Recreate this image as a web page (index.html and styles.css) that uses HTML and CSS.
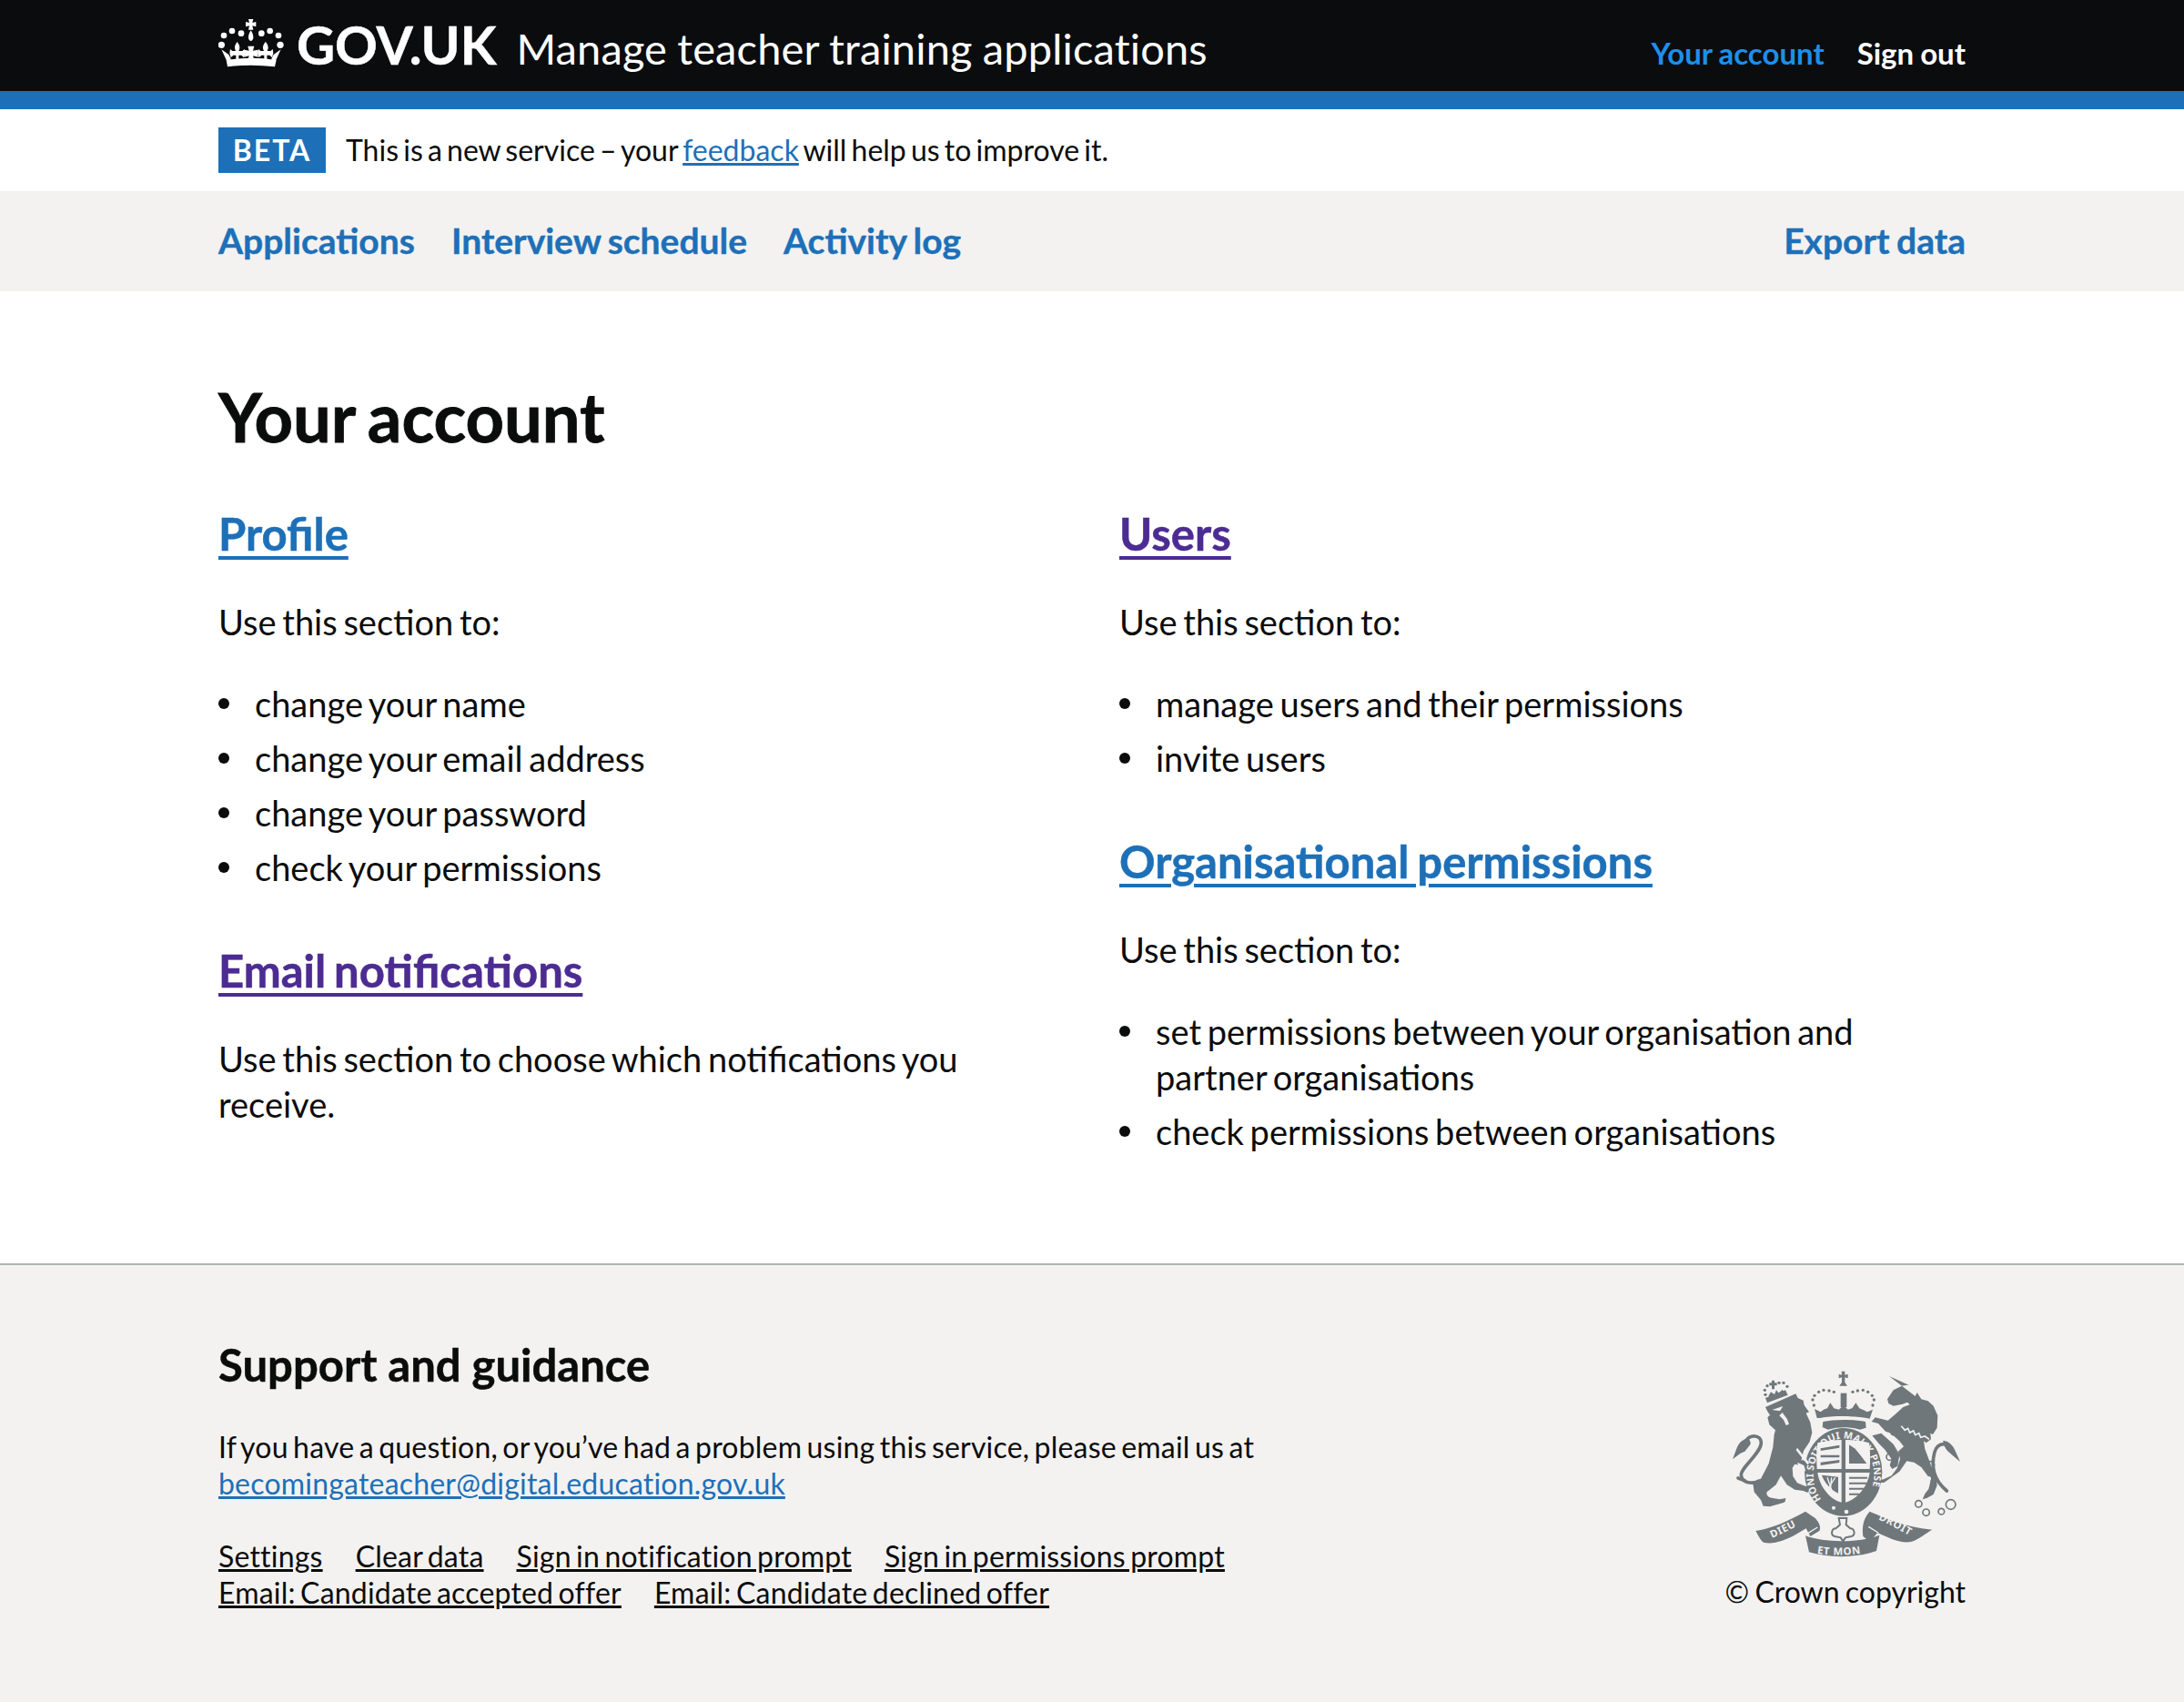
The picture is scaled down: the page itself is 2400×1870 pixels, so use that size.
FILE: index.html
```html
<!DOCTYPE html>
<html lang="en">
<head>
<meta charset="utf-8">
<title>Your account</title>
<link rel="stylesheet" href="styles.css">
</head>
<body>
<header class="masthead">
  <div class="wrap masthead-inner">
    <div class="brand">
      <svg class="crown" viewBox="30 30 216 162" aria-hidden="true">
        <g fill="#fff">
          <path d="M129 33h16l-3 12 12-3v16l-12-3 3 13h-16l3-13-12 3V42l12 3z"/>
          <path d="M137 70c6 10 8 16 8 24 0 6-4 11-8 11s-8-5-8-11c0-8 2-14 8-24z"/>
          <circle cx="75" cy="72" r="10"/><circle cx="105" cy="80" r="10"/><circle cx="172" cy="80" r="10"/><circle cx="200" cy="72" r="10"/>
          <circle cx="48" cy="87" r="10"/><circle cx="228" cy="87" r="10"/><circle cx="40" cy="118" r="11"/><circle cx="234" cy="118" r="11"/>
          <path d="M56 168Q137 154 221 168L216 190Q137 180 60 190z"/>
          <path d="M40 133L58 172 72 166 64 150zM236 133L218 172 204 166 212 150z"/>
          <path d="M92 108c-9 12-10 20-5 30H76l-7-6-2 13 4 15 8-8h9v18h9v-18h9l8 8 4-15-2-13-7 6H97c5-10 4-18-5-30z"/>
          <path d="M185 108c-9 12-10 20-5 30h-11l-7-6-2 13 4 15 8-8h9v18h9v-18h9l8 8 4-15-2-13-7 6h-11c5-10 4-18-5-30z"/>
          <path d="M127 122h21l-4 15 17-3v24l-17-4 4 14h-21l4-14-16 4v-24l16 3z"/>
        </g>
      </svg>
      <a class="logo" href="#">GOV.UK</a>
      <a class="service" href="#">Manage teacher training applications</a>
    </div>
    <nav class="account-nav">
      <a class="account-active" href="#">Your account</a>
      <a class="account-link" href="#">Sign out</a>
    </nav>
  </div>
</header>
<div class="band">
  <div class="wrap phase">
    <strong class="tag">BETA</strong>
    <span>This is a new service – your <a href="#">feedback</a> will help us to improve it.</span>
  </div>
</div>
<nav class="primary-nav">
  <div class="wrap primary-inner">
    <div class="primary-left">
      <a href="#">Applications</a>
      <a href="#">Interview schedule</a>
      <a href="#">Activity log</a>
    </div>
    <a href="#">Export data</a>
  </div>
</nav>
<div class="band">
  <main class="wrap main">
    <h1>Your account</h1>
    <div class="columns">
      <div class="col">
        <h2><a href="#">Profile</a></h2>
        <p>Use this section to:</p>
        <ul>
          <li>change your name</li>
          <li>change your email address</li>
          <li>change your password</li>
          <li>check your permissions</li>
        </ul>
        <h2><a class="visited" href="#">Email notifications</a></h2>
        <p>Use this section to choose which notifications you receive.</p>
      </div>
      <div class="col">
        <h2><a class="visited" href="#">Users</a></h2>
        <p>Use this section to:</p>
        <ul>
          <li>manage users and their permissions</li>
          <li>invite users</li>
        </ul>
        <h2><a href="#">Organisational permissions</a></h2>
        <p>Use this section to:</p>
        <ul>
          <li>set permissions between your organisation and partner organisations</li>
          <li>check permissions between organisations</li>
        </ul>
      </div>
    </div>
  </main>
</div>
<footer class="footer">
  <div class="wrap footer-inner">
    <div class="footer-main">
      <h2 class="footer-title">Support and guidance</h2>
      <p class="footer-text">If you have a question, or you’ve had a problem using this service, please email us at <a href="#">becomingateacher@digital.education.gov.uk</a></p>
      <div class="footer-links">
        <a href="#">Settings</a>
        <a href="#">Clear data</a>
        <a href="#">Sign in notification prompt</a>
        <a href="#">Sign in permissions prompt</a>
        <a href="#">Email: Candidate accepted offer</a>
        <a href="#">Email: Candidate declined offer</a>
      </div>
    </div>
    <div class="crest-block">
      <svg class="crest" viewBox="120 70 770 630" aria-hidden="true">
        <defs>
          <path id="garter" d="M424 500A100 120 0 1 1 572 500"/>
          <path id="dieu" d="M262 628Q312 606 372 572"/>
          <path id="etmon" d="M410 678Q500 692 585 672"/>
          <path id="droit" d="M612 566Q670 592 735 632"/>
        </defs>
        <g class="ink">
          <!-- lion crown -->
          <path d="M246 182l-6-16 66-26 8 16z"/>
          <path d="M261 108h9v8h8v9h-8v12h-9v-12h-8v-9h8z"/>
          <path d="M250 160l8-14 12 8 6-14 8 10 12-12 6 10-42 22z"/>
          <!-- lion -->
          <path d="M240 196l100-44 7 14 18 8 3 16 16 22-10 4 14 30 6 34-8 30-20 30-8 32c10-4 22 4 31 14l6 14-14 12-14-8-10-16-20-4-8 12 2 28 14 22 26 10 14 2 10 10-12 2-4 8-14-6-28-4-26-16-20-30-16 30-30 24c-4 10 6 20 20 20l22 4 20-4-2 12-8 4-42 12-22-2-8-20-22-26-4-28 12-12 14-4 26-50 14-54 4-42 4-14-20-18-6-24 8-8-8-12z"/>
          <path class="tailstroke" d="M226 440C190 452 162 444 160 420 158 396 228 346 226 312 225 288 190 284 176 308"/>
          <path d="M180 298c-20 8-28 18-34 32l-14 38 26-20 14-6 18-22c4-8-2-18-10-22z"/>
          <path class="tailstroke" d="M150 430l22 8"/>
          <!-- unicorn -->
          <path d="M648 94l86 66 6-12 14 22 22 6 18 16 14 32-2 40-14 22-8-4 2 20-16 12-8-6 4 26 12 32 10 28 12 8-2 18 6 10 2 24-12 30-22 12-14 4 8-18 12-16 6-24-8-18-22-30-24-16-24-4-24 34-30 22-20 14-16 2-8-8 22-4 26-12 18-24 10-30-6-26 18-16-14-18-28-26-18-6-24-26-22-6 12-14 24 6 18 4 28-24 22-20 22-8-8-8-16 6-30 6-16-8-4-14 20-30 28-14 24-4-8-2z"/>
          <path d="M592 290l30-8 40 36 20 34-6 38-18 10-8-12 6-20-22-32-20-20z"/>
          <path class="tailstroke" d="M838 472C806 446 782 404 798 344 808 310 846 310 858 340"/>
          <path d="M826 306c18 2 30 14 38 30l18 40-26-22-16-14c-8-10-14-22-14-34z"/>
          <!-- royal crown -->
          <path d="M491 78h11v12l10-3v14l-10-3v16l8 12h-26l8-12v-16l-10 3V87l10 3z"/>
          <path d="M488 150h20v46h-20z"/>
          <path d="M410 232l-8-30 20 10 10-8 12-4 10-18 12 18 16 4 16-14 14 14 14-4 12-18 12 18 14 6 12 6 18-8-10 30c-50-10-120-10-164-2z"/>
          <path d="M430 244c36-8 100-8 140 0l2 20-20 6c-34-10-72-10-106 0l-18-8z"/>
          <!-- garter and shield -->
          <ellipse cx="497" cy="410" rx="128" ry="145"/>
          <path class="paper" d="M412 314c24-6 52-10 79-10v96h-81c-2-32-2-60 2-86zM504 304c28 0 54 4 78 10 4 26 4 54 2 86h-80zM412 412h79v98c-36-8-72-50-79-98zM504 412h80c-7 48-44 90-80 98z"/>
          <path d="M422 332l62-11v9l-62 10zM422 354h62v8h-62zM422 378l62-8v9l-62 9zM516 320l20 13 20 25 18 24h-58zM516 426h60v6h-60zM516 444h58v6h-58zM516 462h50v6h-50zM516 480h34v6h-34z"/>
          <path d="M426 420l54 6v54c-22-10-46-34-54-60z"/>
          <path class="paperline" d="M444 428l18 52M458 428l-4 46M470 428l-24 38"/>
          <!-- ribbon -->
          <path d="M208 604c44-6 100-28 164-64l32 22c14 14 20 32 14 42l-30 18-14-26-34 20c-36 20-76 34-106 26-10-6-18-24-26-38z"/>
          <path d="M584 540c52 22 110 50 206 60-22 12-44 32-70 40-34 6-72-12-110-30l-26 30-22-18c-4-30 0-58 22-82z"/>
          <path d="M372 620c62 24 180 24 244-2l-10 52c-68 24-158 24-222 4z"/>
          <path class="paperline" d="M380 612l32-20M612 610l-32-20"/>
          <path class="outline" d="M482 562h26l-2 22 14 12c14 0 18 22 4 26l-20 4-8 12-8-12-20-4c-14-4-10-26 4-26l14-12z"/>
        </g>
        <g class="dots">
          <circle cx="400" cy="190" r="5"/><circle cx="396" cy="172" r="5"/><circle cx="402" cy="158" r="5"/><circle cx="416" cy="146" r="5"/><circle cx="432" cy="140" r="5"/><circle cx="450" cy="142" r="5"/><circle cx="466" cy="146" r="5"/>
          <circle cx="594" cy="190" r="5"/><circle cx="598" cy="172" r="5"/><circle cx="592" cy="158" r="5"/><circle cx="578" cy="146" r="5"/><circle cx="562" cy="140" r="5"/><circle cx="544" cy="142" r="5"/><circle cx="528" cy="146" r="5"/>
          <circle cx="240" cy="155" r="5"/><circle cx="238" cy="140" r="5"/><circle cx="246" cy="126" r="5"/><circle cx="285" cy="116" r="5"/><circle cx="300" cy="116" r="5"/><circle cx="312" cy="128" r="5"/>
        </g>
        <g class="rings">
          <circle cx="745" cy="515" r="11"/><circle cx="770" cy="543" r="11"/><circle cx="820" cy="540" r="10"/><circle cx="851" cy="517" r="16"/>
          <circle cx="663" cy="278" r="10"/><circle cx="650" cy="360" r="11"/><circle cx="786" cy="386" r="11"/>
        </g>
        <g class="spots">
          <circle cx="778" cy="432" r="8"/><circle cx="752" cy="470" r="8"/><circle cx="507" cy="541" r="7"/><circle cx="465" cy="528" r="6"/>
          <path d="M262 205l36-12-10 16zM296 214l16 22 6 16-10 4-8-18-14-14z"/>
          <path d="M345 330l40 50-6 6-38-48zM345 378l22 10 6 20-22-14z"/>
        </g>
        <path class="collar" d="M688 258l12 14 10-6 6 14 12-6 6 14 12-6 6 14 14-4 14 10"/>
        <g class="crest-text">
          <text class="garter-text"><textPath href="#garter" textLength="470">HONI SOIT QUI MAL Y PENSE</textPath></text>
          <text><textPath href="#dieu">DIEU</textPath></text>
          <text><textPath href="#etmon">ET MON</textPath></text>
          <text><textPath href="#droit">DROIT</textPath></text>
        </g>
      </svg>
      <div class="copyright">© Crown copyright</div>
    </div>
  </div>
</footer>
</body>
</html>
```

FILE: styles.css
```css
* { box-sizing: border-box; }
html, body { margin: 0; padding: 0; }
body {
  font-family: Lato, "Noto Sans", "Liberation Sans", sans-serif;
  color: #0b0c0c;
  background: #f3f2f1;
  font-size: 38px;
  line-height: 50px;
  word-spacing: -3px;
}
a { color: #1d70b8; }
.wrap { width: 1920px; margin: 0 auto; }
.band { background: #fff; }

.masthead { background: #0b0c0e; height: 120px; border-bottom: 20px solid #1d70b8; }
.masthead-inner { display: flex; justify-content: space-between; height: 100px; }
.brand { display: flex; align-items: flex-start; }
.crown { width: 72px; height: 54px; margin-top: 20px; margin-right: 14px; }
.logo { color: #fff; font-weight: 700; font-size: 58px; line-height: 98px; text-decoration: none; -webkit-text-stroke: 0.5px #fff; }
.service { color: #fff; font-size: 47px; line-height: 106px; margin-left: 22px; text-decoration: none; word-spacing: -1px; letter-spacing: 0.15px; }
.account-nav { display: flex; gap: 36px; margin-top: 33px; font-size: 33px; line-height: 50px; font-weight: 700; word-spacing: -1px; }
.account-nav a { text-decoration: none; }
.account-active { color: #1d8feb; }
.account-link { color: #fff; }

.phase { display: flex; align-items: center; gap: 22px; height: 90px; font-size: 32px; word-spacing: -3px; }
.tag { background: #1d70b8; color: #fff; height: 50px; width: 118px; font-size: 32px; line-height: 50px; text-align: center; letter-spacing: 2px; font-weight: 700; }

.primary-nav { background: #f3f2f1; height: 110px; }
.primary-inner { display: flex; justify-content: space-between; align-items: center; height: 108px; font-size: 39px; font-weight: 700; word-spacing: -2px; -webkit-text-stroke: 0.4px #1d70b8; }
.primary-left { display: flex; gap: 40px; }
.primary-nav a { text-decoration: none; }

.main { padding: 88px 0 62px; }
h1 { margin: 0 0 48px; font-size: 74px; line-height: 100px; font-weight: 700; word-spacing: -4px; -webkit-text-stroke: 0.8px #0b0c0c; }
.columns { display: grid; grid-template-columns: 960px 960px; column-gap: 30px; margin-right: -30px; }
.col h2 { margin: 0 0 42px; font-size: 49px; line-height: 60px; font-weight: 700; }
.col h2 a { text-decoration-thickness: 4px; text-underline-offset: 6px; -webkit-text-stroke: 0.5px currentColor; }
.col a.visited { color: #4c2c92; }
.col p { margin: 0 0 40px; width: 830px; }
.col ul { list-style: none; margin: 0 0 58px; padding: 0 0 0 40px; }
.col li { position: relative; margin-bottom: 10px; width: 800px; }
.col li::before { content: ""; position: absolute; left: -40px; top: 19px; width: 12px; height: 12px; border-radius: 50%; background: #0b0c0c; }

.footer { border-top: 2px solid #b1b4b6; background: #f3f2f1; height: 482px; font-size: 32px; letter-spacing: 0.2px; }
.footer-inner { display: flex; justify-content: space-between; padding-top: 80px; }
.footer-main { width: 1180px; }
.footer-title { margin: 0 0 42px; font-size: 49px; line-height: 58px; font-weight: 700; letter-spacing: 0; word-spacing: 0; -webkit-text-stroke: 0.5px #0b0c0c; }
.footer-text { margin: 0 0 40px; line-height: 40px; }
.footer-links { display: flex; flex-wrap: wrap; column-gap: 36px; line-height: 40px; }
.footer-links a { color: #0b0c0c; }

.crest-block { display: flex; flex-direction: column; align-items: flex-end; margin-top: 34px; }
.crest { width: 256.670px; height: 210px; margin-right: 3px; display: block; }
.ink { fill: #6f777b; }
.paper { fill: #f3f2f1; }
.tailstroke { fill: none; stroke: #6f777b; stroke-width: 11px; stroke-linecap: round; }
.paperline { fill: none; stroke: #f3f2f1; stroke-width: 4px; }
.outline { fill: none; stroke: #6f777b; stroke-width: 6px; }
.dots { fill: #6f777b; }
.rings { fill: none; stroke: #6f777b; stroke-width: 5px; }
.spots { fill: #f3f2f1; }
.collar { fill: none; stroke: #f3f2f1; stroke-width: 5px; }
.crest-text { font-family: "Noto Sans", sans-serif; font-size: 34px; font-weight: 700; fill: #f3f2f1; word-spacing: 0; letter-spacing: 2px; }
.garter-text { font-size: 32px; letter-spacing: 0; }
.copyright { line-height: 40px; margin-top: 15px; letter-spacing: 0; word-spacing: -2px; }
```
